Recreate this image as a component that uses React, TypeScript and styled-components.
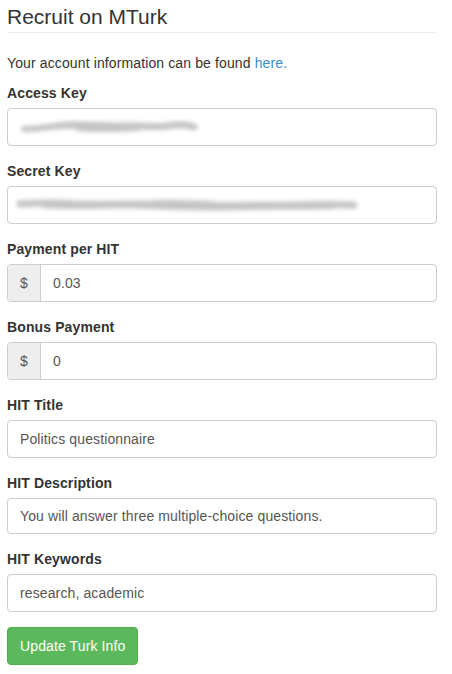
import styled, { createGlobalStyle } from 'styled-components';

const GlobalStyle = createGlobalStyle`
  body {
    margin: 0;
    background: #fff;
    font-family: "Liberation Sans", Arial, sans-serif;
    font-size: 14px;
    line-height: 20px;
    letter-spacing: 0.12px;
    color: #333;
  }
  * { box-sizing: border-box; }
`;

const Page = styled.div`
  width: 430px;
  margin-left: 7px;
  padding-top: 5px;
`;

const Heading = styled.h3`
  margin: 0 0 20px;
  padding-bottom: 4px;
  border-bottom: 1px solid #eee;
  font-size: 21px;
  line-height: 23px;
  font-weight: 400;
  letter-spacing: 0;
  color: #333;
`;

const Intro = styled.p`
  margin: 0 0 10px;
  a {
    color: #428bca;
    text-decoration: none;
  }
`;

const FormGroup = styled.div`
  margin-bottom: 15px;
`;

const Label = styled.label`
  display: block;
  margin-bottom: 5px;
  font-weight: 700;
  color: #333;
`;

const Field = styled.div<{ $h?: number }>`
  display: flex;
  align-items: stretch;
  height: ${p => p.$h ?? 38}px;
  border: 1px solid #ccc;
  border-radius: 4px;
  overflow: hidden;
  background: #fff;
`;

const Addon = styled.span`
  width: 33px;
  display: flex;
  align-items: center;
  justify-content: center;
  background: #eee;
  border-right: 1px solid #ccc;
  color: #555;
`;

const Input = styled.input`
  flex: 1;
  min-width: 0;
  border: 0;
  outline: 0;
  padding: 0 12px;
  font: inherit;
  letter-spacing: inherit;
  color: #555;
  background: transparent;
`;

const Smear = styled.svg<{ $left: number }>`
  display: block;
  align-self: center;
  margin-left: ${p => p.$left}px;
`;

const Button = styled.button`
  height: 38px;
  padding: 0 12px;
  border: 1px solid #4cae4c;
  border-radius: 4px;
  background: #5cb85c;
  color: #fff;
  font: inherit;
  letter-spacing: inherit;
  cursor: pointer;
`;

function Blurred({ id, width, left, paths }: { id: string; width: number; left: number; paths: [string, number][] }) {
  return (
    <Smear $left={left} width={width} height={22} viewBox={`0 0 ${width} 22`}>
      <defs>
        <filter id={id} x="-10%" y="-100%" width="120%" height="300%">
          <feGaussianBlur stdDeviation="2" />
        </filter>
      </defs>
      <g filter={`url(#${id})`} stroke="#c4c4c4" fill="none" strokeLinecap="round">
        {paths.map(([d, w], i) => (
          <path key={i} d={d} strokeWidth={w} />
        ))}
      </g>
    </Smear>
  );
}

const fields = [
  { label: 'HIT Title', value: 'Politics questionnaire' },
  { label: 'HIT Description', value: 'You will answer three multiple-choice questions.', h: 36 },
  { label: 'HIT Keywords', value: 'research, academic' },
];

export default function App() {
  return (
    <Page>
      <GlobalStyle />
      <Heading>Recruit on MTurk</Heading>
      <Intro>
        Your account information can be found <a href="#">here.</a>
      </Intro>

      <FormGroup>
        <Label>Access Key</Label>
        <Field>
          <Blurred
            id="ak"
            left={10}
            width={182}
            paths={[
              ['M6 13 C20 13 30 11 40 10 C55 8 60 12 75 11', 6],
              ['M40 10 C60 7 80 10 100 10 C120 9 135 12 150 10 C160 8 170 9 176 11', 7],
              ['M60 13 C80 15 100 14 120 13', 4],
            ]}
          />
        </Field>
      </FormGroup>

      <FormGroup>
        <Label>Secret Key</Label>
        <Field>
          <Blurred
            id="sk"
            left={6}
            width={346}
            paths={[
              ['M6 10 C25 9 40 8 60 10 C100 11 130 9 160 11 C200 12 240 11 280 11 C310 10 330 11 340 11', 7],
              ['M30 12 C50 14 80 13 110 12 C150 14 190 15 230 14 C260 13 290 14 320 13', 4],
              ['M140 8 C160 7 180 9 200 9', 4],
            ]}
          />
        </Field>
      </FormGroup>

      <FormGroup>
        <Label>Payment per HIT</Label>
        <Field>
          <Addon>$</Addon>
          <Input defaultValue="0.03" />
        </Field>
      </FormGroup>

      <FormGroup>
        <Label>Bonus Payment</Label>
        <Field>
          <Addon>$</Addon>
          <Input defaultValue="0" />
        </Field>
      </FormGroup>

      {fields.map(f => (
        <FormGroup key={f.label}>
          <Label>{f.label}</Label>
          <Field $h={f.h}>
            <Input defaultValue={f.value} />
          </Field>
        </FormGroup>
      ))}

      <Button type="button">Update Turk Info</Button>
    </Page>
  );
}
